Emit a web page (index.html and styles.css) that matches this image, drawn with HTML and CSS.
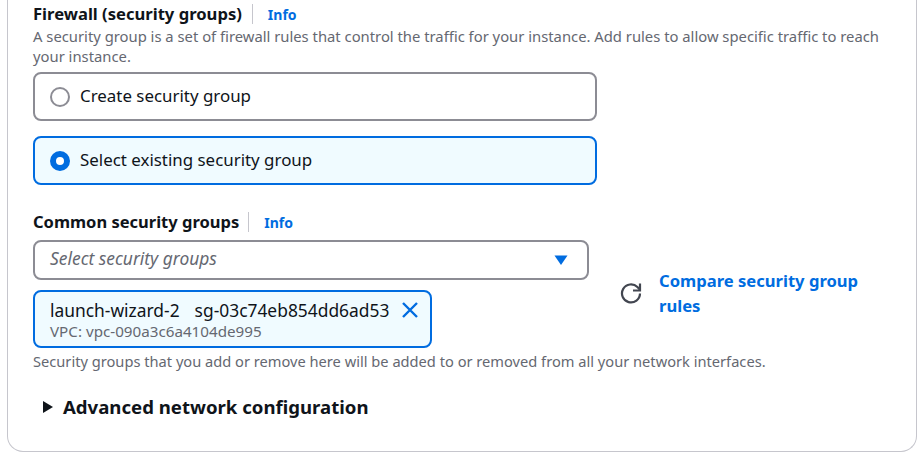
FILE: index.html
```html
<!DOCTYPE html>
<html lang="en">
<head>
  <meta charset="UTF-8" />
  <title>Firewall (security groups)</title>
  <link rel="stylesheet" href="styles.css">
</head>
<body>
  <main class="card">
    <section class="field">
      <div class="label-row">
        <h2 class="label">Firewall (security groups)</h2>
        <a class="info" href="#">Info</a>
      </div>
      <p class="desc">A security group is a set of firewall rules that control the traffic for your instance. Add rules to allow specific traffic to reach your instance.</p>
      <div class="tile">
        <span class="radio"></span>
        <span class="tile-text">Create security group</span>
      </div>
      <div class="tile tile-on">
        <span class="radio radio-on"></span>
        <span class="tile-text">Select existing security group</span>
      </div>
    </section>

    <section class="common">
      <div class="common-left">
        <div class="label-row">
          <h2 class="label label-sm">Common security groups</h2>
          <a class="info" href="#">Info</a>
        </div>
        <div class="select">
          <span class="placeholder">Select security groups</span>
          <svg class="caret" width="16" height="16" viewBox="0 0 16 16"><path d="M1.5 3.5h13L8 13z" fill="#006ce0"/></svg>
        </div>
        <div class="token">
          <div class="token-body">
            <div class="token-name"><span>launch-wizard-2</span><span>sg-03c74eb854dd6ad53</span></div>
            <div class="token-vpc">VPC: vpc-090a3c6a4104de995</div>
          </div>
          <svg class="token-x" width="16" height="16" viewBox="0 0 16 16" fill="none" stroke="#006ce0" stroke-width="2.4"><path d="M1 1l14 14M15 1L1 15"/></svg>
        </div>
      </div>
      <div class="common-right">
        <svg class="refresh" width="22" height="22" viewBox="0 0 22 22" fill="none" stroke="#424650" stroke-width="2.2">
          <path d="M20 11.5a9 9 0 1 1-2.6-6.4l2.6 2.6"/>
          <path d="M20 1.5v7h-7"/>
        </svg>
        <a class="compare" href="#">Compare security group rules</a>
      </div>
    </section>

    <p class="hint">Security groups that you add or remove here will be added to or removed from all your network interfaces.</p>

    <div class="advanced">
      <svg width="12" height="14" viewBox="0 0 12 14"><path d="M1 1l10 6-10 6z" fill="#0f141a"/></svg>
      <h3>Advanced network configuration</h3>
    </div>
  </main>
</body>
</html>
```

FILE: styles.css
```css
* {
  box-sizing: border-box;
}

html, body {
  margin: 0;
  padding: 0;
  height: 455px;
  overflow: hidden;
  background: #fff;
}

body {
  font-family: "Noto Sans", "Open Sans", sans-serif;
  font-size: 16.6px;
  color: #0f141a;
}

.card {
  margin: 0 6px 0 7px;
  height: 452px;
  padding: 4px 25px 0;
  border: 1px solid #c6c6cd;
  border-top: none;
  border-radius: 0 0 16px 16px;
}

.label-row {
  display: flex;
  align-items: center;
  height: 20px;
}

.label {
  margin: 0;
  font-size: 16.6px;
  line-height: 20px;
  font-weight: 700;
  padding-right: 10px;
  border-right: 1px solid #c6c6cd;
}

.label-sm {
  font-size: 16.5px;
  padding-right: 9px;
}

.info {
  margin-left: 15px;
  font-size: 14px;
  font-weight: 700;
  color: #006ce0;
  text-decoration: none;
}

.desc {
  margin: 2px 0 6px;
  font-size: 14.8px;
  line-height: 20px;
  color: #656871;
}

.tile {
  display: flex;
  align-items: center;
  gap: 10px;
  width: 564px;
  height: 49px;
  padding-left: 15px;
  margin-bottom: 15px;
  border: 2px solid #8c8c94;
  border-radius: 8px;
}

.tile-on {
  background: #f0fbff;
  border-color: #006ce0;
}

.tile-text {
  font-size: 16.9px;
  padding-bottom: 2px;
}

.radio {
  width: 20px;
  height: 20px;
  border: 2px solid #8c8c94;
  border-radius: 50%;
  background: #fff;
}

.radio-on {
  border: 6px solid #006ce0;
}

.common {
  display: flex;
  align-items: flex-start;
  margin-top: 27px;
}

.common-left {
  width: 556px;
}

.common-left .label-row {
  margin-bottom: 8px;
}

.select {
  display: flex;
  align-items: center;
  justify-content: space-between;
  height: 40px;
  padding: 0 18px 0 15px;
  border: 2px solid #8c8c94;
  border-radius: 8px;
}

.placeholder {
  font-size: 17.4px;
  font-style: italic;
  color: #656871;
  padding-bottom: 4px;
}

.common-right {
  display: flex;
  align-items: center;
  gap: 17px;
  width: 270px;
  margin: 56px 0 0 31px;
}

.refresh {
  flex: none;
}

.compare {
  font-weight: 700;
  line-height: 25px;
  color: #006ce0;
  text-decoration: none;
}

.token {
  display: flex;
  justify-content: space-between;
  width: 399px;
  height: 58px;
  margin-top: 10px;
  padding: 7px 12px 0 15px;
  background: #f0fbff;
  border: 2px solid #006ce0;
  border-radius: 8px;
}

.token-name {
  display: flex;
  gap: 15px;
  font-size: 17.4px;
  line-height: 22px;
}

.token-vpc {
  font-size: 15.2px;
  line-height: 20px;
  color: #656871;
}

.token-x {
  margin-top: 3px;
}

.hint {
  margin: 3px 0 0;
  font-size: 14.65px;
  line-height: 20px;
  color: #656871;
}

.advanced {
  display: flex;
  align-items: center;
  gap: 9px;
  margin: 24px 0 0 9px;
}

.advanced h3 {
  margin: 0;
  font-size: 18.6px;
  line-height: 24px;
  font-weight: 700;
}
```
